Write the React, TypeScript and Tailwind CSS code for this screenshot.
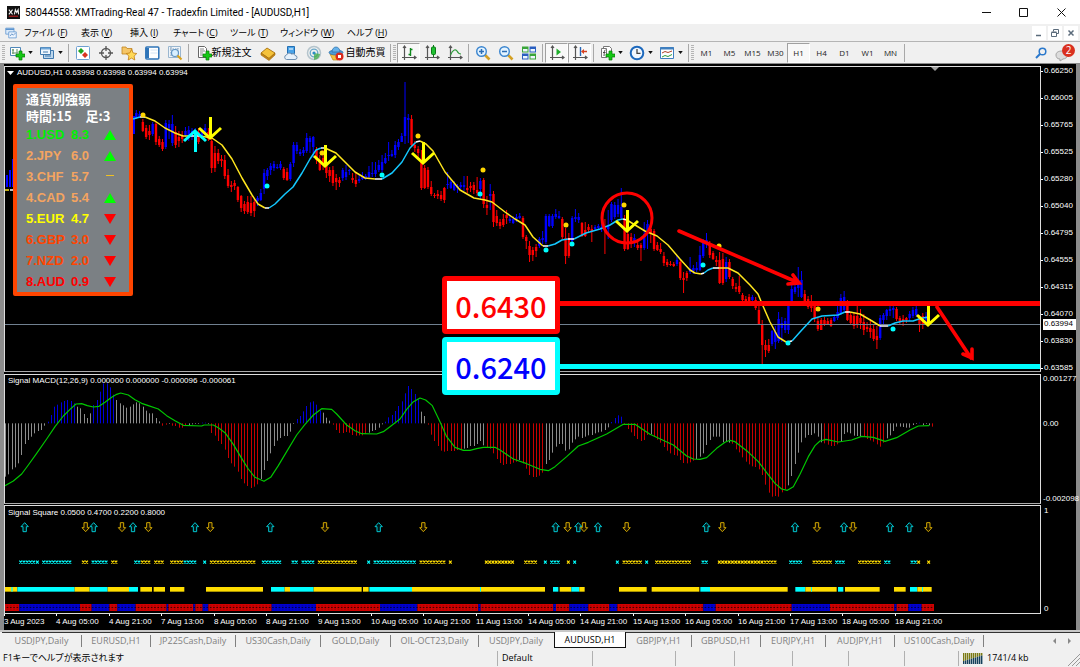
import React from "react";

const CANDLES =
  "b110,113,118,119 b111,114,117,118 r119,122,131,132 r125,128,137,139 r125,131,135,140 b122,124,134,136 r122,124,142,145 r136,139,145,147 r139,142,149,151 b120,123,147,149 " +
  "b120,124,128,139 b115,124,143,146 r126,132,145,148 r131,137,141,147 r131,136,139,143 b127,131,135,137 b126,130,137,141 b128,131,136,140 b128,131,134,138 r128,132,142,144 " +
  "b128,130,136,139 b124,128,133,137 r128,132,139,141 r138,141,168,173 r146,153,168,172 r149,153,161,164 r155,159,161,167 r155,160,176,179 r169,175,186,188 r181,185,187,192 " +
  "r180,183,186,190 r186,187,200,202 r195,196,208,212 r201,204,211,214 r196,202,212,214 r196,203,213,216 r199,202,211,217 b196,198,201,206 b189,193,200,201 b169,173,189,194 " +
  "b168,170,176,180 b163,166,170,175 b161,164,168,171 b164,167,168,169 b161,164,168,170 r167,169,178,180 r168,172,180,181 b162,164,179,181 b142,145,163,167 b142,145,151,154 " +
  "b149,152,154,156 b147,150,153,156 b133,138,151,153 b136,138,142,153 b136,137,147,158 r147,150,160,164 r155,160,170,171 r150,158,165,170 r158,163,173,178 r167,170,176,182 " +
  "r166,170,183,186 r174,178,182,190 r177,180,183,187 b168,170,178,181 b165,172,177,180 b169,170,171,175 r173,178,180,183 r173,180,184,187 b174,179,181,183 b172,176,179,180 " +
  "b174,176,178,180 b166,172,177,178 b162,173,174,177 b162,170,174,177 b160,165,170,172 b155,162,170,172 b153,158,163,164 b142,155,156,161 b150,154,156,157 b141,145,155,158 " +
  "b139,142,147,150 b133,136,142,142 b82,117,136,144 b114,118,120,143 r115,119,145,146 r141,145,148,152 r146,149,153,158 r150,160,188,190 r165,168,188,189 r167,170,187,189 " +
  "r181,187,194,196 r193,195,196,198 r190,194,196,199 r191,195,199,201 r187,188,200,203 b172,184,185,189 b179,182,188,189 b181,184,190,191 b184,186,188,193 b182,185,187,189 " +
  "b176,185,187,191 r176,188,190,193 r182,186,188,192 r182,185,190,194 r177,190,193,196 b178,181,189,199 r178,180,204,208 r196,205,208,215 b184,194,196,210 r191,194,222,227 " +
  "r210,216,223,226 r219,222,226,229 r214,219,225,227 r210,215,218,224 b216,219,221,223 b216,219,223,224 b214,217,219,222 b213,216,218,219 r216,218,237,239 r235,237,241,249 " +
  "r241,246,255,262 r247,250,255,261 r244,247,251,257 b237,239,246,248 b231,238,240,244 b214,216,242,244 b214,216,226,227 b214,216,226,228 b209,214,217,219 b211,216,218,219 " +
  "r217,219,237,239 r228,238,256,264 r233,238,256,258 b216,218,241,244 b209,217,219,222 b213,217,220,223 r222,223,236,237 r222,230,236,237 r224,227,230,232 r225,229,231,242 " +
  "b225,227,229,231 b224,226,228,229 b224,227,228,232 r219,226,228,254 b210,226,229,239 b202,204,220,222 b202,205,217,219 b199,205,214,217 b188,207,218,220 r215,220,249,251 " +
  "r230,234,249,250 r233,237,241,248 b234,238,241,247 r239,245,248,250 r243,245,248,261 b222,234,248,250 b220,224,231,249 r227,229,233,243 r229,231,249,251 r242,245,250,251 " +
  "r243,249,252,254 r252,256,263,266 r259,262,265,267 r261,264,265,266 r262,264,266,267 b256,260,264,266 r260,262,278,280 r272,278,280,293 r271,273,278,281 b257,269,272,274 " +
  "b265,268,271,274 b262,268,270,272 b246,255,270,271 b239,242,256,258 b233,240,243,248 r241,244,255,258 r251,253,259,260 r256,260,262,266 r252,260,283,284 r253,259,283,285 " +
  "b257,262,279,282 r259,262,277,279 r277,279,286,289 r283,287,289,292 r276,286,292,294 r293,295,300,303 r296,299,301,302 r294,297,301,304 b295,297,300,302 r297,300,308,310 " +
  "r306,310,324,325 r320,324,345,364 r340,345,350,357 r339,345,351,353 b330,331,344,346 b326,332,342,349 b312,319,341,343 b317,323,328,342 b318,321,330,333 b304,306,330,334 " +
  "b284,289,303,305 b281,287,292,294 b267,280,288,297 b271,280,297,298 r290,294,301,306 r296,299,307,309 r295,303,308,312 r305,306,318,322 r318,321,329,331 r318,320,330,330 " +
  "r317,320,325,326 r318,321,324,325 r318,320,326,327 b315,317,321,322 b302,312,318,320 b294,298,313,315 b291,297,310,312 r300,302,320,321 r312,315,323,325 r313,316,326,329 " +
  "r306,316,325,328 r309,318,323,329 r314,322,330,335 r322,327,329,332 r319,328,332,338 r324,329,339,341 r326,336,340,349 b315,318,338,340 b313,315,320,324 b309,310,316,320 " +
  "b306,309,311,316 b306,308,310,318 r307,309,319,321 r316,318,321,325 r315,319,321,326 r317,318,320,323 b311,314,318,321 b307,310,316,318 b306,309,315,317 r315,318,325,332 " +
  "r313,316,325,329 b312,316,320,322";

// Letter switches the colour, numbers are bar ends with the base line at 160
const MACD =
  "g 320 313 298 292 280 255 222 210 200 190 183 180 167 b 155 135 110 104 97 93 90 93 100 g 110 115 132 144 130 b 105 90 65 40 40 52 74 g 90 100 106 113 110 103 97 100 110 122 130 130 144 154 " +
  "r 167 164 g 162 r 167 168 173 173 166 g 167 163 161 160 b 158 158 g 162 r 189 197 213 222 239 264 280 290 305 327 340 348 354 350 343 g 327 300 273 250 228 212 204 198 198 185 160 " +
  "b 147 138 124 108 97 94 104 122 g 128 143 152 r 164 180 189 189 186 188 195 197 196 196 192 g 188 183 180 173 163 b 155 142 135 123 108 94 70 48 57 72 88 g 125 138 " +
  "r 164 194 213 228 242 245 243 243 243 240 238 g 236 234 228 228 222 213 226 r 231 236 250 267 279 285 282 282 278 275 g 270 r 280 296 315 321 321 317 308 " +
  "g 282 270 248 230 222 222 242 238 218 208 200 204 200 196 195 190 187 185 180 172 b 156 144 136 140 r 162 177 187 198 207 213 210 195 g 193 r 200 209 218 231 242 250 255 257 270 279 280 277 272 " +
  "g 267 260 250 225 210 200 200 200 217 216 218 r 221 238 247 262 275 283 289 291 298 315 344 368 380 378 380 367 358 g 346 318 282 248 217 203 195 195 190 200 217 " +
  "r 220 224 228 228 223 g 216 192 187 190 197 198 200 r 200 207 211 215 223 230 218 g 205 196 183 170 170 171 173 173 165 160 b 158 g 165 162 166 r 170";

const SIGNAL_LINE =
  "15,347 40,333 65,312 85,285 110,250 140,207 165,170 190,138 210,118 228,102 245,101 262,107 280,111 297,109 315,97 335,82 350,73 362,69 385,75 405,89 425,100 445,107 475,117 500,137 525,152 550,166 605,168 612,165 640,165 655,173 675,188 700,223 725,265 745,297 765,322 792,334 812,322 835,287 860,245 890,195 915,163 940,135 965,116 995,118 1010,132 1040,165 " +
  "1065,182 1085,191 1130,192 1150,185 1170,170 1200,147 1220,118 1238,97 1260,84 1277,90 1297,107 1320,155 1340,200 1365,232 1390,241 1410,241 1430,236 1450,232 1485,232 1500,240 1540,267 1580,281 1620,298 1645,302 1665,290 1700,260 1735,228 1765,217 1820,192 1870,163 1905,163 1950,193 2020,225 2060,258 2080,267 " +
  "2100,268 2120,263 2150,235 2175,217 2190,211 2205,215 2240,242 2275,275 2300,308 2325,340 2345,357 2362,361 2380,350 2400,313 2425,260 2445,227 2460,213 2478,208 2515,216 2555,210 2585,199 2620,202 2655,214 2690,203 2730,180 2755,168 2788,167";

const YELLOW_LINES = [
  "5,190 9,190",
  "145,117 155,121 165,128 175,133 183,136 190,136",
  "200,136 212,138 222,145 232,159 242,178 252,195 258,204 265,208",
  "325,148 336,153 348,165 355,172 365,178 375,179",
  "420,141 426,144 433,151 445,172 460,190 474,198 485,200 492,202 505,212 515,219 525,225 533,237 543,246",
  "627,220 635,225 645,231 657,236 668,245 680,259 690,270 695,273 701,274",
  "719,268 728,268 738,273 750,285 758,294 763,306 770,322 778,337 786,342",
  "850,312 860,314 872,321 880,326",
];
const CYAN_LINES = [
  "133,119 140,117",
  "269,208 275,204 285,194 293,187 302,173 310,159 316,150 321,148",
  "382,179 392,173 402,162 410,148 416,142",
  "548,246 555,244 562,240 568,239",
  "574,239 586,233 600,229 610,225 618,220 623,219",
  "704,273 708,270 713,268",
  "792,341 800,332 812,319 822,316 838,315 845,312",
  "888,326 895,323 903,321 913,321 922,318 930,317",
];
const WHITE_LINES = ["10,190 13,190", "140,117 145,117", "190,136 200,136", "265,208 269,208", "321,148 325,148", "375,179 382,179", "416,142 420,141", "543,246 548,246", "568,239 574,239", "623,219 627,220", "701,274 704,273", "713,268 719,268", "786,342 792,341", "845,312 850,312", "880,326 888,326"];

const YELLOW_DOTS = [[143, 115], [322, 153], [418, 136], [483, 170], [566, 225], [624, 205], [719, 246], [818, 309]];
const CYAN_DOTS = [[267, 186], [382, 175], [480, 194], [546, 250], [572, 244], [703, 265], [788, 343], [893, 329]];
const SELL_ARROWS = [[210, 140], [325, 168], [423, 165], [627, 233], [928, 327]];

const UP_MARKS = [74, 281, 399, 585, 811, 1136, 1667, 1735, 1794, 2119, 2385, 2532, 2670, 2728];
const DOWN_MARKS = [257, 366, 445, 631, 975, 1270, 1703, 1752, 1880, 2167, 2451, 2559, 2785];
const CROSS_RUNS =
  "c62-98 c112-112 c131-206 y250-260 c279-323 y338-348 c407-417 y427-447 y467-487 y515-545 c555-585 c614-614 y634-762 c790-840 c879-889 c909-939 y958-1067 c1106-1106 c1125-1245 y1263-1333 y1351-1351 y1459-1539 y1577-1607 c1636-1636 c1655-1675 y1705-1705 c1724-1724 c1852-1852 y1872-1922 c1940-1940 y1970-2070 c2109-2119 y2158-2325 c2372-2402 y2442-2492 c2510-2530 y2579-2639 c2657-2667 c2736-2746 y2756-2756 y2786-2786";
const BAR_RUNS =
  "y15-52 c34-38 c52-224 y224-269 c269-323 y323-387 c387-414 y421-456 y461-495 y510-553 y618-789 c813-854 y854-870 c870-941 y941-1085 y1089-1106 c1108-1236 y1236-1635 c1440-1443 c1659-1675 y1679-1714 c1714-1738 y1738-1754 y1857-1940 y1955-2098 c2101-2130 y2130-2363 c2386-2416 y2416-2510 c2433-2436 c2514-2530 y2535-2639 y2682-2717 c2730-2752 y2752-2795 c2766-2769";
const BAND_RUNS =
  "r15-58 b58-240 r240-275 b275-328 r328-352 b352-407 r407-500 b500-505 r505-580 b580-586 r586-608 b608-625 r625-815 b815-948 r948-1140 b1140-1252 r1252-1435 b1435-1442 r1442-1660 b1660-1668 r1668-1708 b1708-1765 r1765-1828 b1828-1852 r1852-2110 b2110-2147 r2147-2375 b2375-2490 r2490-2683 b2683-2690 r2690-2725 b2725-2765 r2765-2802";

const DATES = ["3 Aug 2023", "4 Aug 05:00", "4 Aug 21:00", "7 Aug 13:00", "8 Aug 05:00", "8 Aug 21:00", "9 Aug 13:00", "10 Aug 05:00", "10 Aug 21:00", "11 Aug 13:00", "14 Aug 05:00", "14 Aug 21:00", "15 Aug 13:00", "16 Aug 05:00", "16 Aug 21:00", "17 Aug 13:00", "18 Aug 05:00", "18 Aug 21:00"];
const PRICES = ["0.66250", "0.66005", "0.65765", "0.65525", "0.65280", "0.65040", "0.64795", "0.64555", "0.64315", "0.64070", "0.63830", "0.63585"];

const STRENGTH = [
  { name: "1.USD", value: "8.3", dir: "up", color: "text-[#00f000]" },
  { name: "2.JPY", value: "6.0", dir: "up", color: "text-[#f4a460]" },
  { name: "3.CHF", value: "5.7", dir: "flat", color: "text-[#f4a460]" },
  { name: "4.CAD", value: "5.4", dir: "up", color: "text-[#f4a460]" },
  { name: "5.EUR", value: "4.7", dir: "down", color: "text-[#ffff00]" },
  { name: "6.GBP", value: "3.0", dir: "down", color: "text-[#ff4500]" },
  { name: "7.NZD", value: "2.0", dir: "down", color: "text-[#ff4500]" },
  { name: "8.AUD", value: "0.9", dir: "down", color: "text-[#ff0000]" },
];

const MENU = [
  { label: "ファイル", k: "F", w: "w-[57px]" },
  { label: "表示", k: "V", w: "w-[49px]" },
  { label: "挿入", k: "I", w: "w-[43px]" },
  { label: "チャート", k: "C", w: "w-[57px]" },
  { label: "ツール", k: "T", w: "w-[50px]" },
  { label: "ウィンドウ", k: "W", w: "w-[67px]" },
  { label: "ヘルプ", k: "H", w: "w-[50px]" },
];

const TABS = [
  { label: "USDJPY,Daily", w: "w-[80px]" },
  { label: "EURUSD,H1", w: "w-[69px]" },
  { label: "JP225Cash,Daily", w: "w-[85px]" },
  { label: "US30Cash,Daily", w: "w-[85px]" },
  { label: "GOLD,Daily", w: "w-[70px]" },
  { label: "OIL-OCT23,Daily", w: "w-[88px]" },
  { label: "USDJPY,Daily", w: "w-[75px]" },
  { label: "AUDUSD,H1", w: "w-[72px]" },
  { label: "GBPJPY,H1", w: "w-[66px]" },
  { label: "GBPUSD,H1", w: "w-[69px]" },
  { label: "EURJPY,H1", w: "w-[65px]" },
  { label: "AUDJPY,H1", w: "w-[69px]" },
  { label: "US100Cash,Daily", w: "w-[89px]" },
];

const COLORS: Record<string, string> = { g: "#8c8c8c", r: "#c80000", b: "#0000dc", y: "#ffdd00", c: "#00ffff" };

const parseRuns = (runs: string) =>
  runs.split(" ").map((t) => {
    const [from, to] = t.slice(1).split("-").map(Number);
    return { type: t[0], from, to };
  });

const parseMacd = () => {
  const bars: { color: string; end: number }[] = [];
  let color = "g";
  MACD.split(" ").forEach((t) => {
    if (/[a-z]/.test(t)) color = t;
    else bars.push({ color, end: Number(t) });
  });
  return bars;
};

/* ---------- icons ---------- */

const Ico = ({ children }: { children: React.ReactNode }) => (
  <svg viewBox="0 0 16 16" className="h-4 w-4 shrink-0" fill="none">
    {children}
  </svg>
);
const plus = <path d="M10 6h3v3h3v3h-3v3h-3v-3H7V9h3z" fill="#14c814" stroke="#067a06" strokeWidth=".7" />;
const axes = <path d="M3.500 1v14M1 12.500h14M2 3l1.500-2L5 3M13 11l2 1.500-2 1.500" stroke="#555" strokeWidth="1.200" />;

const NewChart = () => (
  <Ico><path d="M1.500 2.500h10v8h-10z" fill="#fff" stroke="#4f87b8" /><path d="M4 4v5M3 5h2M8 4v4M3 8h6" stroke="#5a8f62" />{plus}</Ico>
);
const Profiles = () => (
  <Ico><path d="M4.500 5.500h10v8h-10z" fill="#bcd6ec" stroke="#3f78ad" /><path d="M1.500 2.500h10v7h-10z" fill="#eef6fd" stroke="#3f78ad" /><path d="M2 3.500h9" stroke="#6ea6d8" strokeWidth="2" /><path d="M4 7h5M6 11h6" stroke="#3f78ad" /></Ico>
);
const MarketWatch = () => (
  <Ico><rect x="1.500" y="1.500" width="13" height="13" rx="1" fill="#fff" stroke="#6ea0d2" /><path d="M3 6l3-3 3 3-3 3z" fill="#1fa51f" /><path d="M7 10l3-3 3 3-3 3z" fill="#d8321f" /></Ico>
);
const Crosshair = () => (
  <Ico><circle cx="8" cy="8" r="4.500" stroke="#555" strokeWidth="1.300" /><path d="M8 1v5M8 10v5M1 8h5M10 8h5" stroke="#555" strokeWidth="1.300" /></Ico>
);
const FolderStar = () => (
  <Ico><path d="M1 2h4l1 1.500h5V9H1z" fill="#f6c667" stroke="#bf8420" strokeWidth=".8" /><path d="M10.500 4.500l1.700 3.500 3.600.500-2.700 2.600.700 3.900-3.300-1.900L7.200 15l.700-3.900-2.700-2.600 3.600-.500z" fill="#ffd957" stroke="#c27c12" strokeWidth=".8" /></Ico>
);
const Terminal = () => (
  <Ico><rect x="1.800" y="2" width="13" height="12" rx="1" fill="#fff" stroke="#2e74b8" strokeWidth="1.500" /><path d="M2 3h3v10H2z" fill="#2e74b8" /><path d="M6.500 5h7M6.500 8h7" stroke="#d4e4f4" /></Ico>
);
const Tester = () => (
  <Ico><path d="M1.500 1.500h12v11h-12z" fill="#eef4fa" stroke="#9ab6cf" /><path d="M3 4h8M4 2v9M11 3v4" stroke="#7f9bb5" strokeDasharray="1.500 1" /><circle cx="8" cy="8" r="3.500" fill="#d8efff" stroke="#5f94c4" strokeWidth="1.200" /><path d="M10.500 10.500l4 4" stroke="#d9a21c" strokeWidth="2.200" /></Ico>
);
const NewOrder = () => (
  <Ico><path d="M2.500 1.500h6l2 2v9h-8z" fill="#fff" stroke="#666" /><path d="M4 4h4M4 6h5M4 8h3M4 10h3" stroke="#888" />{plus}</Ico>
);
const Book = () => (
  <Ico><path d="M1 8l6-5 8 5-6 5.500z" fill="#f5c33b" stroke="#a9720e" strokeWidth=".9" /><path d="M1 8v2l8 5.500 6-5.500V8l-6 5.500z" fill="#c78a17" stroke="#a06a0c" strokeWidth=".6" /></Ico>
);
const Cloud = () => (
  <Ico><path d="M4.500 1.500h7v7h-7z" fill="#4aa3e8" stroke="#236fb3" /><path d="M6 4h4" stroke="#fff" /><path d="M3.500 14.500a2.300 2.300 0 010-4.500 3 3 0 015-1 2.500 2.500 0 013.500 1.500 2 2 0 010 4z" fill="#e6f0fa" stroke="#6e8fb0" /></Ico>
);
const Signals = () => (
  <Ico><circle cx="8" cy="8" r="6.500" stroke="#b5c4cc" strokeWidth="1.500" /><circle cx="8" cy="8" r="3.800" stroke="#6aa8c8" strokeWidth="1.300" /><path d="M8 8v7a7 7 0 006-6z" fill="#47ae4d" opacity=".8" /><circle cx="8" cy="8" r="1.600" fill="#2c8fc4" /></Ico>
);
const AutoTrade = () => (
  <Ico><path d="M2 9l3 6h5l4-6z" fill="#f3c23f" stroke="#b98716" strokeWidth=".7" /><ellipse cx="8" cy="7.500" rx="7" ry="2.500" fill="#4c9bd8" stroke="#2a6ca5" strokeWidth=".7" /><path d="M4 7a4 5 0 018 0z" fill="#65b1ea" stroke="#2a6ca5" strokeWidth=".7" /><circle cx="11.500" cy="11.500" r="4" fill="#d92a1c" /><path d="M10 10h3v3h-3z" fill="#fff" /></Ico>
);
const BarChart = () => (
  <Ico>{axes}<path d="M9.500 3v8M7.500 9.500h2M9.500 4.500h2" stroke="#0f8a1d" strokeWidth="1.400" /></Ico>
);
const CandleChart = () => (
  <Ico>{axes}<path d="M9.500 0v12" stroke="#0b7a17" /><rect x="7.500" y="2" width="4" height="7.500" rx="1" fill="#1fc131" stroke="#0b7a17" /></Ico>
);
const LineChart = () => (
  <Ico>{axes}<path d="M3.500 10C6 4 9 4 10 6s2 3 4 3" stroke="#2f9c3c" strokeWidth="1.200" /></Ico>
);
const Zoom = ({ plusSign }: { plusSign?: boolean }) => (
  <Ico><path d="M9.500 9.500l5 5" stroke="#d4a022" strokeWidth="2.600" /><circle cx="6.500" cy="6.500" r="4.800" fill="#e3f3ff" stroke="#3b85cf" strokeWidth="1.400" /><path d={plusSign ? "M4 6.500h5M6.500 4v5" : "M4 6.500h5"} stroke="#2b6db5" strokeWidth="1.500" /></Ico>
);
const Tiles = () => (
  <Ico>
    <path d="M1 1.500h6.500v6H1zM8.500 8.500H15v6H8.500z" fill="#3aa53a" />
    <path d="M8.500 1.500H15v6H8.500zM1 8.500h6.500v6H1z" fill="#2a5fc0" />
    <path d="M2 4h4.500v2.500H2zM9.500 4H14v2.500H9.500zM2 11h4.500v2.500H2zM9.500 11H14v2.500H9.500z" fill="#eef6ff" />
  </Ico>
);
const AutoScroll = () => (
  <Ico>{axes}<path d="M7.500 3.500v7l4.500-3.500z" fill="#1fae2c" /></Ico>
);
const ChartShift = () => (
  <Ico>{axes}<path d="M8.500 2v9" stroke="#2565b5" strokeWidth="1.400" /><path d="M15 5.700h-3V4L9 6.500 12 9V7.300h3z" fill="#d6401f" /></Ico>
);
const Indicators = () => (
  <Ico><path d="M4.500 1.500h6l2 2v8h-8z" fill="#fff" stroke="#777" /><path d="M2.500 3.500h5v9h-5z" fill="#fff" stroke="#777" /><path d="M6.500 5C5 5 5.500 7 5 11M4 7.500h2.500" stroke="#444" />{plus}</Ico>
);
const Clock = () => (
  <Ico><circle cx="8" cy="8" r="6.300" fill="#f2f8ff" stroke="#1d69bd" strokeWidth="2" /><path d="M8 4v4.300h3.500" stroke="#444" strokeWidth="1.300" /></Ico>
);
const Template = () => (
  <Ico><path d="M1.500 2.500h13v11h-13z" fill="#fff" stroke="#3f7fbf" /><path d="M1 3.500h14" stroke="#3f7fbf" strokeWidth="2" /><path d="M3 8l3-1.500 3 1 4-1.500" stroke="#b0442a" /><path d="M3 12l3-1.500 3 1 4-2" stroke="#2f9c3c" /></Ico>
);

const Caret = () => (
  <svg viewBox="0 0 6 4" className="h-[3px] w-[5px] shrink-0"><path d="M0 0h6L3 4z" fill="#111" /></svg>
);

/* ---------- toolbar parts ---------- */

const ToolButton = ({ children, label, pressed }: { children: React.ReactNode; label: string; pressed?: boolean }) => (
  <button
    aria-label={label}
    className={
      pressed
        ? "flex h-[20px] w-[23px] shrink-0 items-center justify-center border border-b-white border-l-[#a0a0a0] border-r-white border-t-[#a0a0a0] bg-[#f8f8f8]"
        : "flex h-[20px] w-[23px] shrink-0 items-center justify-center"
    }
  >
    {children}
  </button>
);
const DropButton = ({ children, label }: { children: React.ReactNode; label: string }) => (
  <button aria-label={label} className="flex w-[30px] shrink-0 items-center justify-center gap-[3px]">
    {children}
    <Caret />
  </button>
);
const Sep = () => <div className="mx-[2px] h-[18px] w-px shrink-0 bg-[#a8a8a8]" />;
const Handle = () => (
  <div className="mr-px h-[16px] w-[3px] shrink-0 bg-[repeating-linear-gradient(180deg,#b4b4b4_0_1px,#f0f0f0_1px_2px)]" />
);

const TitleBar = () => (
  <header className="flex h-6 items-center bg-white pl-[7px]">
    <svg viewBox="0 0 14 14" className="h-[13px] w-[13px]">
      <rect width="14" height="14" fill="#111" />
      <path d="M2 4l4 5M6 4L2 9M8 9l1-5 1.500 3L12 4l.500 5" stroke="#eee" strokeWidth="1.200" fill="none" />
      <path d="M2 11h10" stroke="#d22" />
    </svg>
    <h1 className="ml-[5px] flex-1 whitespace-nowrap font-['Roboto',sans-serif] text-[10px] text-black">58044558: XMTrading-Real 47 - Tradexfin Limited - [AUDUSD,H1]</h1>
    <button aria-label="最小化" className="flex w-[37px] justify-center"><svg className="h-[9px] w-[9px]"><path d="M0 4.500h9" stroke="#111" /></svg></button>
    <button aria-label="最大化" className="flex w-[37px] justify-center"><svg className="h-[9px] w-[9px]"><path d="M.500.500h8v8h-8z" stroke="#111" fill="none" /></svg></button>
    <button aria-label="閉じる" className="flex w-[38px] justify-center"><svg className="h-[9px] w-[9px]"><path d="M.500.500l8 8M8.500.500l-8 8" stroke="#111" /></svg></button>
  </header>
);

const MenuBar = () => (
  <nav className="flex h-[18px] items-center border-b border-[#b4b4b4] bg-[#f0f0f0] pl-[5px]">
    <svg viewBox="0 0 16 16" className="mr-[7px] h-3 w-3" fill="none">
      <path d="M1 1.500h11v8H1z" fill="#dcebfa" stroke="#5b93cf" /><path d="M1 3h11" stroke="#5b93cf" strokeWidth="2" />
      <path d="M5 6.500h10v8H5z" fill="#eef6ff" stroke="#5b93cf" /><path d="M7 12l2-3 2 2 3-3" stroke="#4a80bd" />
    </svg>
    {MENU.map((m) => (
      <button key={m.label} className={`${m.w} whitespace-nowrap text-left text-[9px] text-black [font-feature-settings:'palt']`}>
        {m.label} (<u>{m.k}</u>)
      </button>
    ))}
    <div className="flex-1" />
    <div className="flex gap-[2px] pr-[2px]">
      <button aria-label="最小化" className="flex h-[14px] w-[14px] items-center justify-center bg-white"><svg className="h-2 w-2"><path d="M1 6.500h5" stroke="#5b6b7b" strokeWidth="1.500" /></svg></button>
      <button aria-label="元に戻す" className="flex h-[14px] w-[14px] items-center justify-center bg-white"><svg className="h-2 w-2"><path d="M2.500 2.500v-2h5v4h-2M.500 3.500h5v4h-5zM.500 3h5" stroke="#5b6b7b" fill="none" /></svg></button>
      <button aria-label="閉じる" className="flex h-[14px] w-[14px] items-center justify-center bg-white"><svg className="h-2 w-2"><path d="M1.500 1.500l5 5M6.500 1.500l-5 5" stroke="#5b6b7b" strokeWidth="1.500" /></svg></button>
    </div>
  </nav>
);

const ToolBar = () => (
  <div className="flex h-[22px] items-center border-b border-[#8a8a8a] bg-[#f0f0f0] pl-[2px]">
    <Handle />
    <DropButton label="新規チャート"><NewChart /></DropButton>
    <DropButton label="組表示"><Profiles /></DropButton>
    <Sep />
    <ToolButton label="気配値"><MarketWatch /></ToolButton>
    <ToolButton label="データ"><Crosshair /></ToolButton>
    <ToolButton label="ナビゲーター"><FolderStar /></ToolButton>
    <ToolButton label="ターミナル"><Terminal /></ToolButton>
    <ToolButton label="テスター"><Tester /></ToolButton>
    <Sep />
    <button className="flex w-[65px] shrink-0 items-center justify-center whitespace-nowrap text-[10px] text-black"><NewOrder />新規注文</button>
    <ToolButton label="エディタ"><Book /></ToolButton>
    <ToolButton label="VPS"><Cloud /></ToolButton>
    <ToolButton label="シグナル"><Signals /></ToolButton>
    <button className="flex w-[63px] shrink-0 items-center justify-center gap-[2px] whitespace-nowrap text-[10px] text-black"><AutoTrade />自動売買</button>
    <Sep />
    <Handle />
    <ToolButton label="バー" pressed><BarChart /></ToolButton>
    <ToolButton label="ローソク足"><CandleChart /></ToolButton>
    <ToolButton label="ライン"><LineChart /></ToolButton>
    <Sep />
    <ToolButton label="拡大"><Zoom plusSign /></ToolButton>
    <ToolButton label="縮小"><Zoom /></ToolButton>
    <ToolButton label="整列"><Tiles /></ToolButton>
    <Sep />
    <ToolButton label="自動スクロール" pressed><AutoScroll /></ToolButton>
    <ToolButton label="チャートシフト" pressed><ChartShift /></ToolButton>
    <Sep />
    <DropButton label="インディケータ"><Indicators /></DropButton>
    <DropButton label="時間足"><Clock /></DropButton>
    <DropButton label="定型"><Template /></DropButton>
    <Sep />
    <Handle />
    {["M1", "M5", "M15", "M30", "H1", "H4", "D1", "W1", "MN"].map((t) => (
      <ToolButton key={t} label={t} pressed={t === "H1"}>
        <span className="text-[8px] text-[#222]">{t}</span>
      </ToolButton>
    ))}
    <Sep />
    <div className="flex-1" />
    <button aria-label="検索" className="mr-2">
      <svg viewBox="0 0 12 12" className="h-3 w-3" fill="none"><circle cx="7.500" cy="4.500" r="3.300" stroke="#2a78cc" strokeWidth="1.500" /><path d="M5 7L1 11" stroke="#2a78cc" strokeWidth="2" /></svg>
    </button>
    <button aria-label="通知" className="relative mr-[5px] h-[18px] w-5">
      <svg viewBox="0 0 20 18" className="h-[18px] w-5"><path d="M1 11c0-3 3-4 6-4s6 2 6 4-3 4-5 4l-3 2v-2c-3 0-4-2-4-4z" fill="#dcdcdc" stroke="#a5a5a5" /></svg>
      <span className="absolute right-0 top-0 flex h-[13px] w-[13px] items-center justify-center rounded-full bg-[#d9301f] text-[10px] text-white">2</span>
    </button>
  </div>
);

/* ---------- chart ---------- */

const PricePlot = () => (
  <svg className="block h-full w-full overflow-hidden">
    <g transform="translate(-5 -67)">
      {[[6, 175, 187], [9, 170, 187], [12, 159, 187], [133, 116, 134]].map(([x, a, b]) => (
        <rect key={x} x={x} y={a} width="2" height={b - a} fill="#0000ff" />
      ))}
      {CANDLES.split(" ").map((c, i) => {
        const [hi, top, bottom, lo] = c.slice(1).split(",").map(Number);
        const x = 136.3 + i * 3.277;
        return (
          <g key={i} fill={c[0] === "b" ? "#0000ff" : "#ff0000"}>
            <rect x={x - 0.5} y={hi} width="1" height={lo - hi} />
            <rect x={x - 1.2} y={top} width="2.400" height={bottom - top} />
          </g>
        );
      })}
      <path d="M5 324.500h2000" stroke="#708090" />
      <g fill="none" strokeWidth="1.500" strokeLinejoin="round">
        {YELLOW_LINES.map((p) => <polyline key={p} points={p} stroke="#ffe61e" />)}
        {CYAN_LINES.map((p) => <polyline key={p} points={p} stroke="#14c8ff" />)}
        {WHITE_LINES.map((p) => <polyline key={p} points={p} stroke="#ffffff" />)}
      </g>
      {YELLOW_DOTS.map(([x, y]) => <circle key={x} cx={x} cy={y} r="2.500" fill="#ffd700" />)}
      {CYAN_DOTS.map(([x, y]) => <circle key={x} cx={x} cy={y} r="2.500" fill="#00ffff" />)}
      <g fill="none" strokeWidth="3" stroke="#ffff00">
        {SELL_ARROWS.map(([x, y]) => (
          <path key={x} d={`M${x}.5 ${y - 23}v21M${x - 11} ${y - 12}L${x} ${y - 2}L${x + 11} ${y - 12}`} />
        ))}
        <path d="M195.500 152v-21M184 141L195 131L206 141" stroke="#00ffff" />
      </g>
      <path d="M560 303.500h2000" stroke="#ff0000" strokeWidth="5" />
      <path d="M560 366.500h2000" stroke="#00ffff" strokeWidth="5" />
      <g fill="none" stroke="#ff0000" strokeLinecap="round">
        <circle cx="627" cy="218" r="25" strokeWidth="3" />
        <path d="M679 231L799 283M793 275L799 283L788 284M937 307L971 358M972 349L972 358L963 354" strokeWidth="3.600" />
      </g>
      <path d="M931 67h8l-4 4z" fill="#a0a0a0" />
      <path d="M7 71h7l-3.500 4z" fill="#ffffff" />
    </g>
  </svg>
);

const MacdPlot = () => (
  <svg className="block h-full w-full overflow-hidden">
    <g transform="translate(-5 -5) scale(.33333)">
      {parseMacd().map((b, i) => (
        <rect key={i} x={Math.round(5 + i * 3.277) * 3} y={Math.min(160, b.end)} width="3" height={Math.max(2, Math.abs(b.end - 160))} fill={COLORS[b.color]} />
      ))}
      <polyline points={SIGNAL_LINE} fill="none" stroke="#00c800" strokeWidth="3.500" strokeLinejoin="round" />
    </g>
  </svg>
);

const SquarePlot = () => (
  <svg className="block h-full w-full overflow-hidden">
    <g transform="translate(-5 -6) scale(.33333)">
      {UP_MARKS.map((x) => (
        <path key={x} d={`M${x} 68l11 12h-6v15h-10v-15h-6z`} fill="#001818" stroke="#00c8d2" strokeWidth="3" />
      ))}
      {DOWN_MARKS.map((x) => (
        <path key={x} d={`M${x} 95l11-12h-6v-15h-10v15h-6z`} fill="#181000" stroke="#d2a800" strokeWidth="3" />
      ))}
      {parseRuns(CROSS_RUNS).map((r) => {
        const count = Math.round((r.to - r.from) / 9.83) + 1;
        const d = Array.from({ length: count }, (_, i) => {
          const x = r.from + i * 9.83;
          return `M${x - 4} 182l8 9M${x + 4} 182l-8 9`;
        }).join("");
        return <path key={r.from} d={d} stroke={COLORS[r.type]} strokeWidth="3.500" />;
      })}
      {parseRuns(BAR_RUNS).map((r) => (
        <rect key={r.from} x={r.from} y="261" width={r.to - r.from} height="14" fill={COLORS[r.type]} />
      ))}
      {parseRuns(BAND_RUNS).map((r) => (
        <rect key={r.from} x={r.from} y="312" width={r.to - r.from} height="21" fill={r.type === "r" ? "#d00000" : "#0000d0"} />
      ))}
      <path d="M20 317.500H2800M20 327.500H2800" stroke="#000" strokeWidth="2" strokeDasharray="5 4.830" opacity=".35" />
      <path d="M20 322.500H2800" stroke="#000" strokeWidth="3" strokeDasharray="5 4.830" opacity=".7" />
    </g>
  </svg>
);

const DirectionMark = ({ dir }: { dir: string }) => (
  <svg viewBox="0 0 12 12" className="h-3 w-3">
    {dir === "up" && <path d="M6 1l6 10H0z" fill="#00ff00" />}
    {dir === "down" && <path d="M6 11L0 1h12z" fill="#ff0000" />}
    {dir === "flat" && <path d="M2 4.500h8" stroke="#f0c020" />}
  </svg>
);

const StrengthPanel = () => (
  <aside className="absolute left-[8px] top-[17px] w-[120px] rounded-xs border-4 border-[#ff4500] bg-[#7b8084] pl-[9px] pt-[2px] font-['Noto_Sans_CJK_JP',sans-serif] font-bold text-white">
    <p className="text-[13px] leading-[17px]">通貨別強弱</p>
    <p className="flex gap-[14px] text-[13px] leading-[17px]"><span>時間:15</span><span>足:3</span></p>
    <ul>
      {STRENGTH.map((s) => (
        <li key={s.name} className={`flex h-[21px] items-center font-['Liberation_Sans',sans-serif] text-[13px] ${s.color}`}>
          <span className="w-[45px]">{s.name}</span>
          <span className="w-[33px]">{s.value}</span>
          <DirectionMark dir={s.dir} />
        </li>
      ))}
    </ul>
  </aside>
);

const Chart = () => (
  <main className="relative border-x-4 border-[#8c8c8c] bg-black pt-[2px] font-['Liberation_Sans',sans-serif] text-[8px] leading-[10px] text-white">
    <section className="flex h-[306px]">
      <div className="relative min-w-0 flex-1 border border-b-[#aaa] border-l-[#ddd] border-r-[#ddd] border-t-[#ddd]">
        <PricePlot />
        <p className="absolute left-[12px] top-px whitespace-nowrap">AUDUSD,H1 0.63998 0.63998 0.63994 0.63994</p>
        <StrengthPanel />
      </div>
      <ul className="relative w-[35px] shrink-0">
        {PRICES.map((p) => (
          <li key={p} className="flex h-[27px] whitespace-nowrap"><span className="mr-px mt-[5px] h-px w-[2px] bg-white" />{p}</li>
        ))}
        <li className="absolute left-[2px] top-[253px] h-[11px] w-[33px] bg-white pl-px text-black">0.63994</li>
      </ul>
    </section>
    <section className="mt-[2px] flex h-[130px]">
      <div className="relative min-w-0 flex-1 border border-b-[#aaa] border-l-[#ddd] border-r-[#ddd] border-t-[#ddd]">
        <MacdPlot />
        <p className="absolute left-[3px] top-px whitespace-nowrap">Signal MACD(12,26,9) 0.000000 0.000000 -0.000096 -0.000061</p>
      </div>
      <div className="flex w-[35px] shrink-0 flex-col justify-between whitespace-nowrap pl-[2px]">
        <span>0.001277</span>
        <span className="pb-[30px]">0.00</span>
        <span>-0.002098</span>
      </div>
    </section>
    <section className="mt-px flex h-[109px]">
      <div className="relative min-w-0 flex-1 border border-[#ddd]">
        <SquarePlot />
        <p className="absolute left-[3px] top-[2px] whitespace-nowrap">Signal Square 0.0500 0.4700 0.2200 0.8000</p>
      </div>
      <div className="flex w-[35px] shrink-0 flex-col justify-between pl-[3px] pt-px">
        <span>1</span>
        <span>0</span>
      </div>
    </section>
    <svg className="block h-4 w-full overflow-hidden">
      {DATES.map((d, i) => (
        <g key={d} fill="#fff">
          <rect x={Math.round(i * 52.4)} y="0" width="1" height="2" />
          <text x={Math.round(i * 52.4)} y="10" fontSize="8">{d}</text>
        </g>
      ))}
    </svg>
    <div className="absolute left-[438px] top-[212px] flex w-[118px] flex-col gap-[3px] text-center font-['Noto_Sans_CJK_JP',sans-serif] text-[29px] font-medium leading-[48px]">
      <div className="h-[58px] rounded-sm border-[5px] border-[#ff0000] bg-white text-[#ff0000]">0.6430</div>
      <div className="h-[58px] rounded-sm border-[5px] border-[#00ffff] bg-white text-[#0000ff]">0.6240</div>
    </div>
  </main>
);

const TabBar = () => (
  <div className="flex h-[19px] items-start border-t-2 border-[#c8c8c8] bg-[#f0f0f0] pl-[2px] text-[9px] text-[#808080]">
    {TABS.map((t, i) =>
      t.label === "AUDUSD,H1" ? (
        <button key={i} className={`${t.w} h-4 shrink-0 whitespace-nowrap border border-t-0 border-[#111] bg-white leading-[14px] text-black`}>{t.label}</button>
      ) : (
        <span key={i} className={`${t.w} flex h-4 shrink-0 items-center border-t border-[#333]`}>
          <button className="flex-1 whitespace-nowrap leading-[14px]">{t.label}</button>
          <span className={i === 6 ? "h-3 w-px" : "h-3 w-px bg-[#808080]"} />
        </span>
      ),
    )}
    <div className="flex h-4 flex-1 items-center justify-end gap-3 border-t border-[#333] pr-[9px]">
      <button aria-label="前へ"><svg className="block h-[6px] w-[3px]"><path d="M3 0v6L0 3z" fill="#888" /></svg></button>
      <button aria-label="次へ"><svg className="block h-[6px] w-[3px]"><path d="M0 0v6l3-3z" fill="#888" /></svg></button>
    </div>
  </div>
);

const StatusBar = () => (
  <footer className="flex h-[18px] items-center bg-[#f0f0f0] pl-[3px] text-[9px] text-black">
    <span className="flex-1 whitespace-nowrap [font-feature-settings:'palt']">F1キーでヘルプが表示されます</span>
    <span className="flex h-[15px] w-[95px] items-center border-l border-[#b0b0b0] pl-1">Default</span>
    <span className="h-[15px] w-[83px] border-l border-[#b0b0b0]" />
    <span className="h-[15px] w-[59px] border-l border-[#b0b0b0]" />
    <span className="h-[15px] w-[58px] border-l border-[#b0b0b0]" />
    <span className="h-[15px] w-[56px] border-l border-[#b0b0b0]" />
    <span className="h-[15px] w-[56px] border-l border-[#b0b0b0]" />
    <span className="h-[15px] w-[54px] border-l border-[#b0b0b0]" />
    <span className="flex h-[15px] w-[122px] items-center gap-1 whitespace-nowrap border-l border-[#b0b0b0] pl-1">
      <svg viewBox="0 0 20 12" className="h-3 w-5">
        {[0, 1, 2, 3, 4, 5, 6, 7, 8, 9].map((i) => (
          <g key={i}>
            <rect x={i * 2} y="1" width="1.400" height={8 - i * 0.6} fill="#7a7a14" />
            <rect x={i * 2} y={9 - i * 0.6} width="1.400" height={3 + i * 0.6} fill="#14405a" />
          </g>
        ))}
      </svg>
      1741/4 kb
      <svg className="ml-auto h-3 w-3 self-end"><path d="M0 12L12 0M4 12l8-8M8 12l4-4" stroke="#999" /></svg>
    </span>
  </footer>
);

const App: React.FC = () => {
  return (
    <div className="flex min-h-screen flex-col overflow-hidden bg-[#f0f0f0] font-['Open_Sans','Noto_Sans_CJK_JP',sans-serif]">
      <TitleBar />
      <MenuBar />
      <ToolBar />
      <Chart />
      <TabBar />
      <StatusBar />
    </div>
  );
};

export default App;
